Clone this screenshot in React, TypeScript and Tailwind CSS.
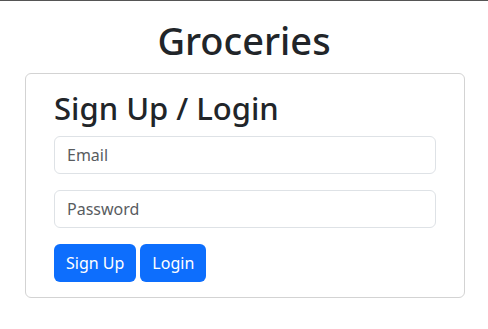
import React from 'react';

export default function App() {
  return (
    <div className="min-h-screen bg-white border-t border-[#555] text-[#212529] font-['Noto_Sans',sans-serif]">
      <h1 className="text-center text-[38px] font-medium leading-[1.2] pt-[17px] pb-[9px]">Groceries</h1>
      <div className="ml-[25px] mr-[23px] border border-[#d3d3d3] rounded-[6px] px-[28px] pt-[16px] pb-[15px]">
        <h2 className="text-[31px] font-medium leading-[1.2] mb-[9px]">Sign Up / Login</h2>
        <input
          type="email"
          placeholder="Email"
          className="block w-full h-[38px] px-[12px] text-[16px] border border-[#dee2e6] rounded-[6px] placeholder:text-[#595c5f] outline-none mb-[16px]"
        />
        <input
          type="password"
          placeholder="Password"
          className="block w-full h-[38px] px-[12px] text-[16px] border border-[#dee2e6] rounded-[6px] placeholder:text-[#595c5f] outline-none mb-[16px]"
        />
        <div className="flex gap-[4px]">
          <button className="h-[38px] px-[12px] text-[16px] text-white bg-[#0d6efd] rounded-[6px]">Sign Up</button>
          <button className="h-[38px] px-[12px] text-[16px] text-white bg-[#0d6efd] rounded-[6px]">Login</button>
        </div>
      </div>
    </div>
  );
}
